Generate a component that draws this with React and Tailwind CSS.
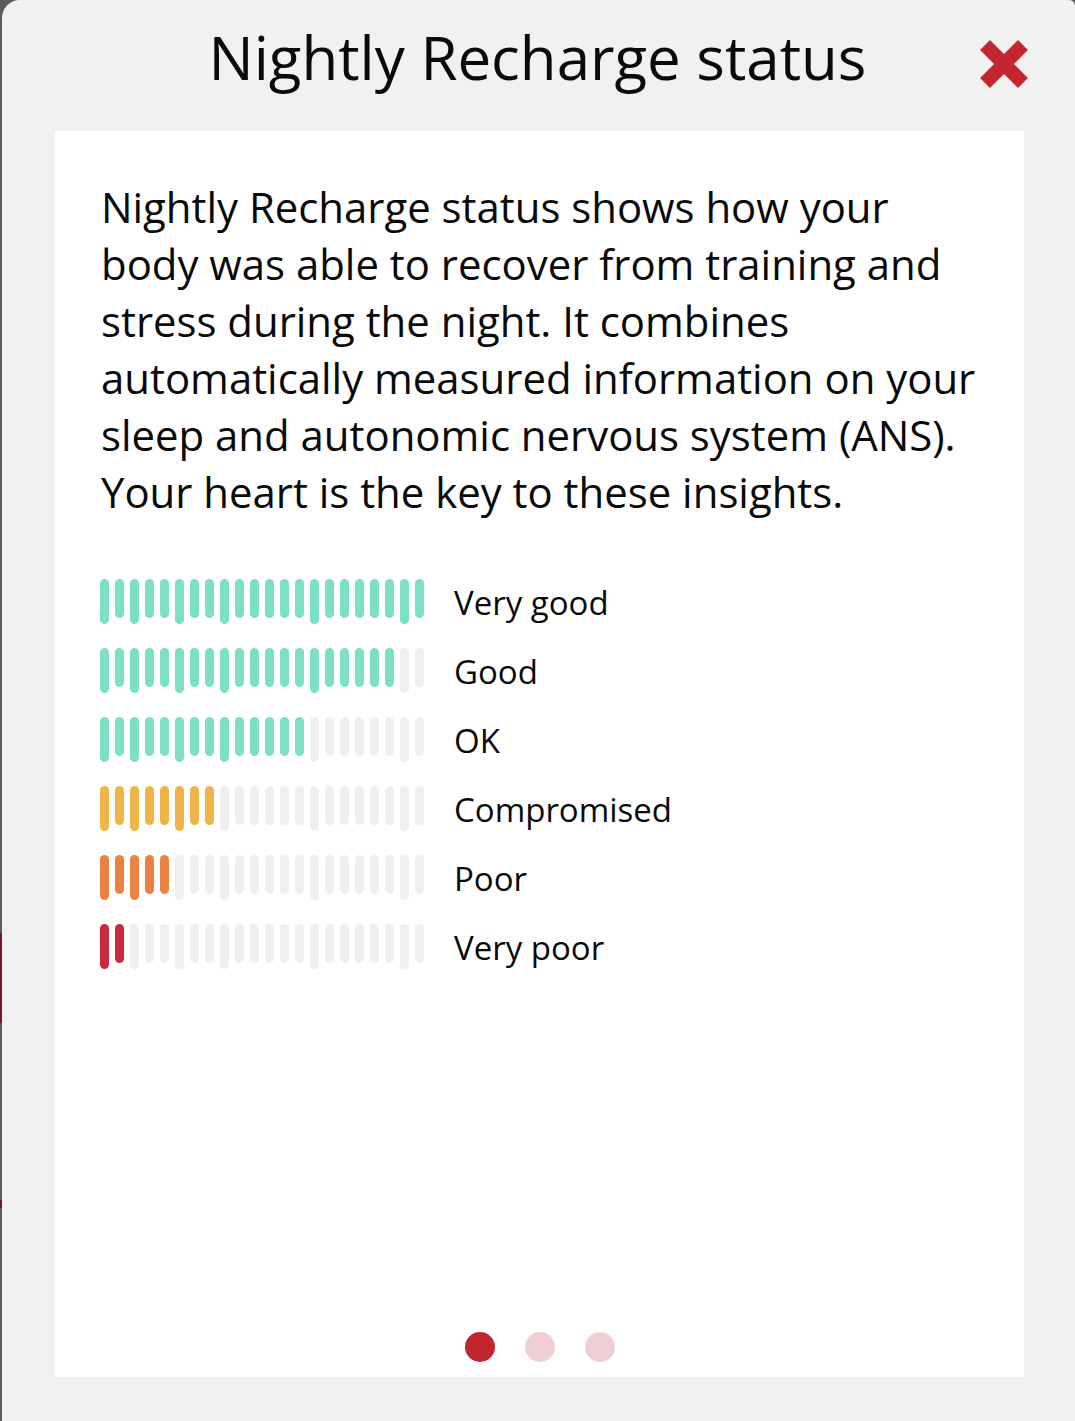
import React from "react";

const ROWS = [
  { label: "Very good", n: 22, color: "bg-[#7ddfc4]" },
  { label: "Good", n: 20, color: "bg-[#7ddfc4]" },
  { label: "OK", n: 14, color: "bg-[#7ddfc4]" },
  { label: "Compromised", n: 8, color: "bg-[#f0b44b]" },
  { label: "Poor", n: 5, color: "bg-[#eb8142]" },
  { label: "Very poor", n: 2, color: "bg-[#c82a42]" },
];

const TALL = new Set([0, 2, 5, 8, 14, 20]);

function Bars({ n, color }) {
  return (
    <div className="flex items-start gap-[6px] h-[45px]">
      {Array.from({ length: 22 }).map((_, i) => (
        <div
          key={i}
          className={`w-[9px] rounded-full ${TALL.has(i) ? "h-[45px]" : "h-[39px]"} ${i < n ? color : "bg-[#efefef]"}`}
        />
      ))}
    </div>
  );
}

export default function App() {
  return (
    <div className="w-[1075px] h-[1421px] flex bg-[#5c5c5c] overflow-hidden" style={{ fontFamily: '"Open Sans", "Noto Sans", sans-serif' }}>
      <div className="w-[2px] flex flex-col">
        <div className="h-[933px]" />
        <div className="h-[90px] bg-[#6e1a26]" />
        <div className="h-[177px]" />
        <div className="h-[8px] bg-[#6e1a26]" />
      </div>
      <div className="flex-1 flex flex-col bg-[#f1f1f1] rounded-tl-[18px] rounded-tr-[6px]">
        <div className="h-[131px] flex items-center relative">
          <div className="w-full text-center text-[60px] leading-none text-[#0a0a0a] pb-[18px] pr-[2px]">
            Nightly Recharge status
          </div>
          <svg className="absolute left-[976px] top-[38px]" width="52" height="52" viewBox="0 0 52 52">
            <path d="M7 7 L45 45 M45 7 L7 45" stroke="#c4262f" strokeWidth="14" strokeLinecap="butt" />
          </svg>
        </div>
        <div className="ml-[53px] mr-[51px] h-[1246px] bg-white flex flex-col">
          <p className="pl-[46px] pr-[42px] pt-[47px] text-[41.9px] leading-[57px] text-[#0a0a0a]">
            Nightly Recharge status shows how your body was able to recover from training and stress during the night. It combines automatically measured information on your sleep and autonomic nervous system (ANS). Your heart is the key to these insights.
          </p>
          <div className="pl-[45px] mt-[59px] flex flex-col gap-[24px]">
            {ROWS.map((r) => (
              <div key={r.label} className="flex items-center h-[45px]">
                <Bars n={r.n} color={r.color} />
                <span className="ml-[30px] pt-[2px] text-[33px] leading-none text-[#0a0a0a]">{r.label}</span>
              </div>
            ))}
          </div>
          <div className="mt-auto pb-[15px] flex justify-center gap-[30px]">
            <div className="w-[30px] h-[30px] rounded-full bg-[#c1262f]" />
            <div className="w-[30px] h-[30px] rounded-full bg-[#f1cdd4]" />
            <div className="w-[30px] h-[30px] rounded-full bg-[#f1cdd4]" />
          </div>
        </div>
      </div>
    </div>
  );
}
